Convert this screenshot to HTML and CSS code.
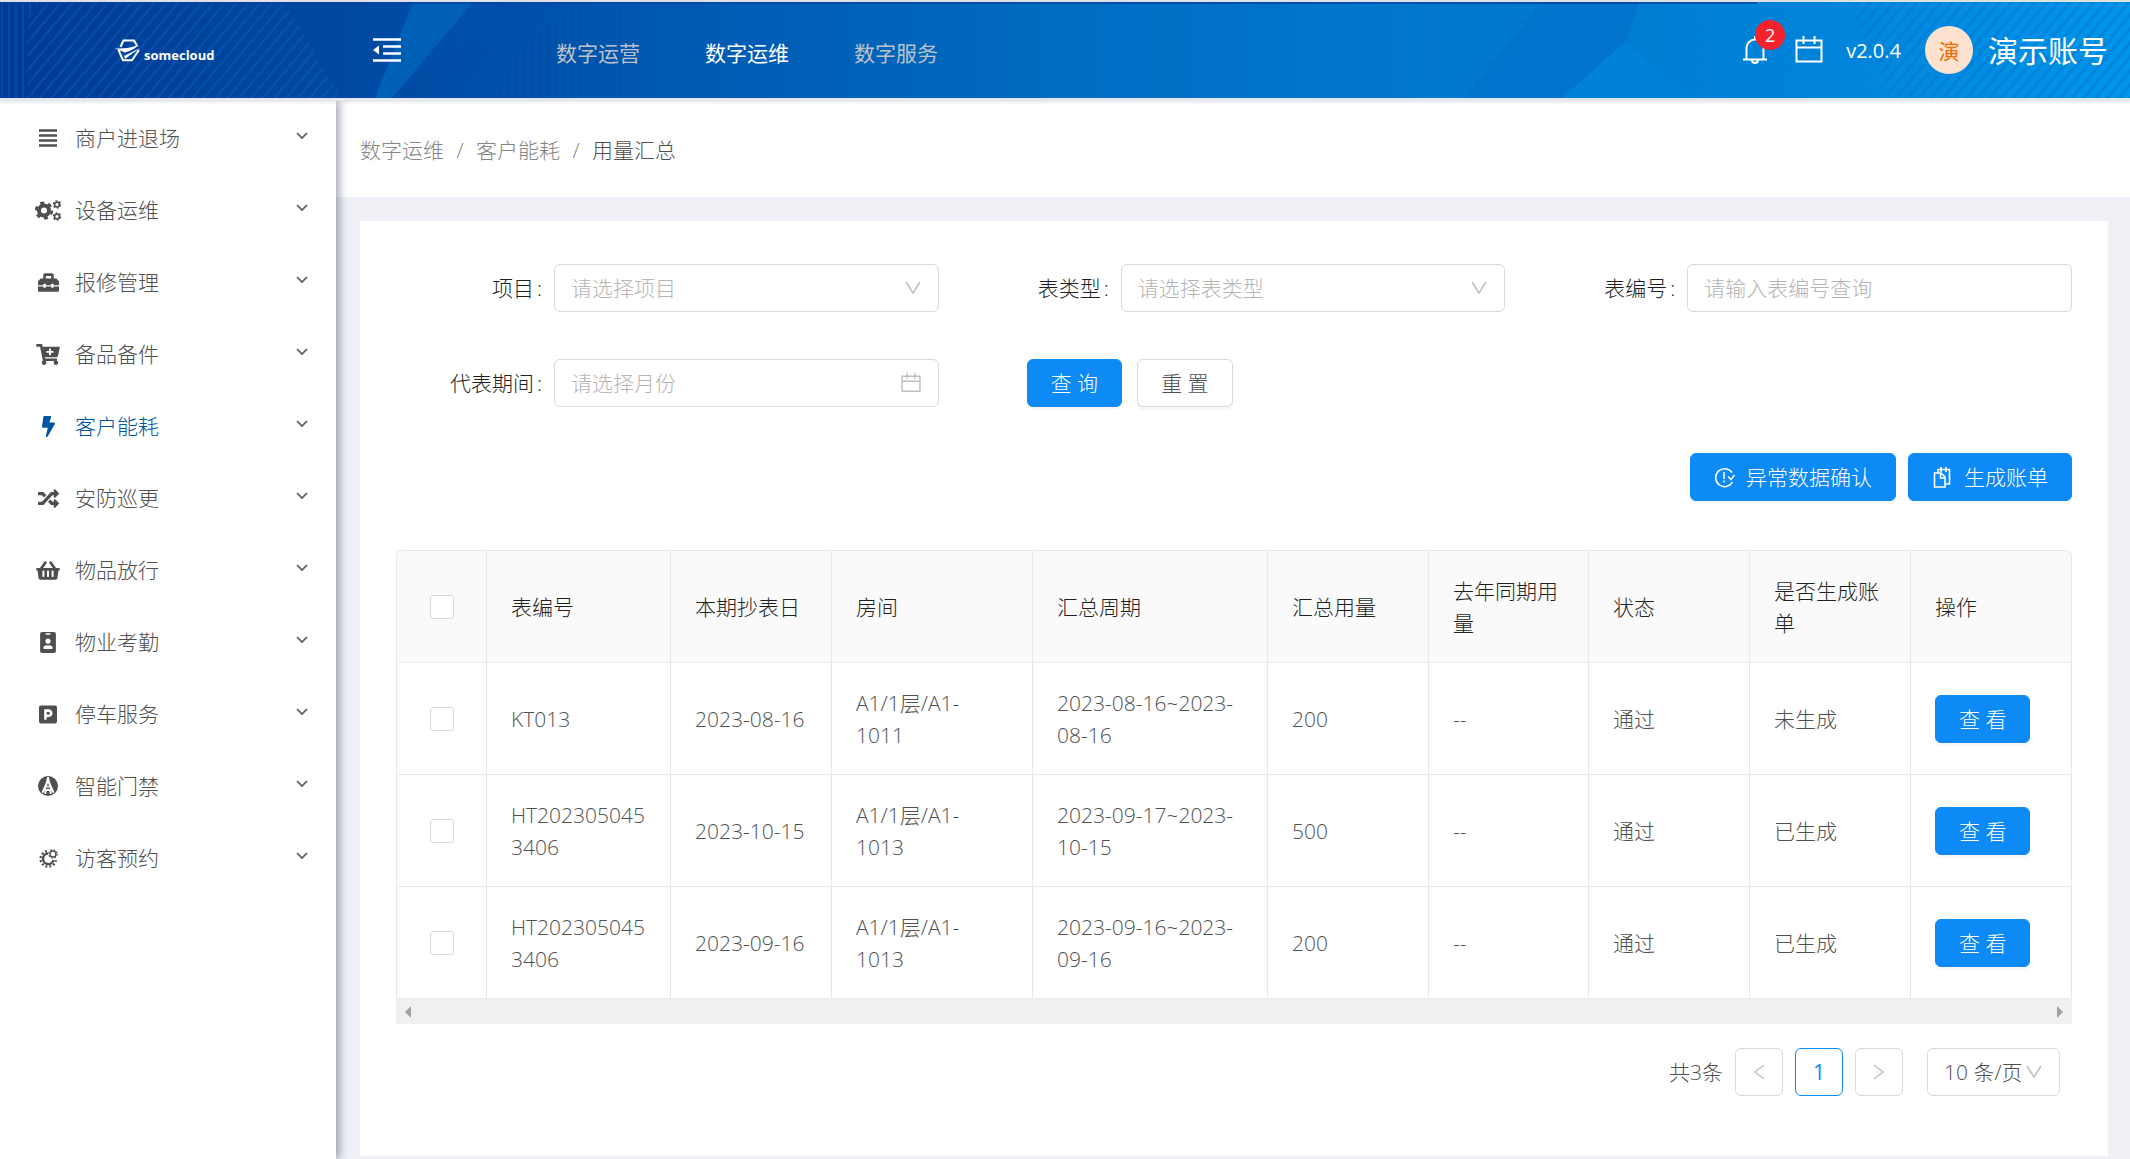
FILE: index.html
```html
<!DOCTYPE html>
<html lang="zh-CN">
<head>
<meta charset="utf-8">
<title>用量汇总</title>
<meta name="viewport" content="width=device-width, initial-scale=1">
<link rel="stylesheet" href="styles.css">
</head>
<body>
<svg width="0" height="0" class="defs" aria-hidden="true">
  <symbol id="chevron" viewBox="0 0 12 12"><path d="M1 3l5 5 5-5" fill="none" stroke="currentColor" stroke-width="1.700"/></symbol>
  <symbol id="arrow-down" viewBox="0 0 16 16"><path d="M1 2l7 11 7-11" fill="none" stroke="currentColor" stroke-width="1.500"/></symbol>
  <symbol id="calendar" viewBox="0 0 28 28"><path d="M1.500 4.500h25v21h-25zM1.500 11.500h25M8.500 0v8M19.500 0v8" fill="none" stroke="currentColor" stroke-width="2"/></symbol>
</svg>

<header class="header">
  <svg class="header-art" viewBox="0 0 2130 96" preserveAspectRatio="none" aria-hidden="true">
    <defs>
      <pattern id="vert" width="7" height="8" patternUnits="userSpaceOnUse"><path d="M2 0v8" stroke="#0a55ae" stroke-width="2" opacity=".6"/></pattern>
      <pattern id="diag" width="9" height="9" patternUnits="userSpaceOnUse" patternTransform="rotate(40)"><path d="M2 0v9" stroke="#0a5cb4" stroke-width="2" opacity=".6"/></pattern>
      <pattern id="fine" width="4" height="4" patternUnits="userSpaceOnUse" patternTransform="rotate(-45)"><path d="M1 0v4" stroke="#003f9c" opacity=".35"/></pattern>
      <pattern id="bright" width="9" height="9" patternUnits="userSpaceOnUse" patternTransform="rotate(40)"><path d="M2 0v9" stroke="#0078d2" stroke-width="3" opacity=".6"/></pattern>
      <linearGradient id="fade"><stop offset="0" stop-color="#fff"/><stop offset="1" stop-color="#000"/></linearGradient>
      <mask id="fade-mask" maskUnits="userSpaceOnUse" x="390" y="0" width="330" height="96"><rect x="390" width="330" height="96" fill="url(#fade)"/></mask>
    </defs>
    <path d="M0 0H40L28 20V96H0z" fill="url(#vert)"/>
    <path d="M40 0H285L340 96H28V20z" fill="url(#diag)"/>
    <path d="M285 0H413L375 96H340z" fill="url(#fine)"/>
    <path d="M413 0H473L392 96H375z" fill="#0060b6"/>
    <g mask="url(#fade-mask)" fill="none" stroke="#004aa4" stroke-width="2" opacity=".7">
      <path d="M402 94v-8h16l78-66h52v76M414 94v-16h18l66-50h42v68M426 94v-22h14l62-36h30v60M438 94v-28h14l56-22h16v52M450 94v-24h14l52-18v44M464 94v-18h12l32-10v30M478 94v-12h22v14M556 20v76M564 12v84M572 4v92M580 0v96M588 0v96M596 0v96M604 0v96M612 0v96M620 0v96M628 0v96M636 0v96M644 0v96M484 12h72M492 4h72"/>
    </g>
    <path d="M1542 0H1640L1625 40 1562 96H1465z" fill="#0074cc"/>
    <path d="M1625 40L1692 96H1562z" fill="#0082d8"/>
    <path d="M1640 0H1848L1892 96H1692L1625 40z" fill="url(#fine)" opacity=".3"/>
    <path d="M1420 3h120M1420 11h110M1420 19h108M1420 27h102M1420 35h98M1420 43h92M1420 51h86M1420 59h80M1420 67h74M1420 75h68" stroke="#0070c8" stroke-width="3" opacity=".35"/>
    <path d="M1848 0H2130V96H1892z" fill="url(#bright)"/>
    <path d="M0 1h1757" stroke="#0040a0" stroke-width="2" opacity=".7"/>
  </svg>
  <a class="logo" href="#" aria-label="somecloud">
    <svg width="26" height="23" viewBox="0 0 26 23" aria-hidden="true"><path d="M5.500 8L8.500 1.500H19l3.500 6M3.500 11l4.500 10.300h9L24 11" fill="none" stroke="#fff" stroke-width="2"/><path d="M0 9.500Q14 10 23 6Q20 11 10 13.500zM25 9L10 20l-1-3 8-4z" fill="#fff"/></svg>
    <span>somecloud</span>
  </a>
  <button class="fold" type="button" aria-label="收起菜单">
    <svg width="28" height="24" viewBox="0 0 28 24"><path d="M0 1.500h28M10 8.500h18M10 15.500h18M0 22.500h28" stroke="#fff" stroke-width="2.500"/><path d="M0 12l6-4.500v9z" fill="#fff"/></svg>
  </button>
  <nav class="nav">
    <a href="#">数字运营</a>
    <a href="#" class="active">数字运维</a>
    <a href="#">数字服务</a>
  </nav>
  <div class="tools">
    <button class="bell" type="button" aria-label="消息">
      <svg width="24" height="28" viewBox="0 0 24 28"><path d="M0 23.500h24M3.500 23V12a8.500 8.500 0 0 1 17 0v11M12 0v4M9 24a3 3 0 0 0 6 0" fill="none" stroke="#fff" stroke-width="2"/></svg>
      <span class="badge">2</span>
    </button>
    <button class="cal" type="button" aria-label="日历"><svg width="28" height="28"><use href="#calendar"/></svg></button>
    <span class="version">v2.0.4</span>
    <span class="avatar">演</span>
    <span class="user">演示账号</span>
  </div>
</header>

<div class="layout">
  <aside class="sidebar">
    <ul class="menu">
      <li><a href="#"><span class="ico"><svg width="18" height="18" viewBox="0 0 18 18"><path d="M0 1.500h18M0 6.500h18M0 11.500h18M0 16.500h18" stroke="currentColor" stroke-width="2.500"/></svg></span>商户进退场<svg class="chev"><use href="#chevron"/></svg></a></li>
      <li><a href="#"><span class="ico"><svg width="26" height="21" viewBox="0 0 26 21" fill="none" stroke="currentColor"><circle cx="9" cy="10.500" r="5" stroke-width="4"/><circle cx="9" cy="10.500" r="7.800" stroke-width="2.600" stroke-dasharray="4.080 4.080"/><circle cx="22" cy="4.500" r="2.400" stroke-width="1.600"/><circle cx="22" cy="4.500" r="3.600" stroke-width="1.400" stroke-dasharray="1.880 1.880"/><circle cx="22" cy="16.500" r="2.400" stroke-width="1.600"/><circle cx="22" cy="16.500" r="3.600" stroke-width="1.400" stroke-dasharray="1.880 1.880"/></svg></span>设备运维<svg class="chev"><use href="#chevron"/></svg></a></li>
      <li><a href="#"><span class="ico"><svg width="21" height="21" viewBox="0 0 512 512"><path fill="currentColor" d="M502.630 214.630l-45.250-45.250c-6-6-14.140-9.370-22.630-9.370H384V80c0-26.510-21.490-48-48-48H176c-26.510 0-48 21.490-48 48v80H77.250c-8.490 0-16.620 3.370-22.630 9.370L9.370 214.630c-6 6-9.370 14.140-9.370 22.630V320h128v-16c0-8.840 7.160-16 16-16h32c8.840 0 16 7.160 16 16v16h128v-16c0-8.840 7.160-16 16-16h32c8.840 0 16 7.160 16 16v16h128v-82.750c0-8.480-3.370-16.620-9.370-22.620zM320 160H192V96h128v64zm64 208c0 8.840-7.160 16-16 16h-32c-8.840 0-16-7.160-16-16v-16H192v16c0 8.840-7.160 16-16 16h-32c-8.840 0-16-7.160-16-16v-16H0v96c0 17.670 14.330 32 32 32h448c17.670 0 32-14.330 32-32v-96H384v16z"/></svg></span>报修管理<svg class="chev"><use href="#chevron"/></svg></a></li>
      <li><a href="#"><span class="ico"><svg width="24" height="21" viewBox="0 0 576 512"><path fill="currentColor" d="M504.717 320H211.572l6.545 32h268.418c15.401 0 26.816 14.301 23.403 29.319l-5.517 24.276C523.112 414.668 536 433.828 536 456c0 31.202-25.519 56.444-56.824 55.994-29.823-.429-54.350-24.631-55.155-54.447-.440-16.287 6.085-31.049 16.803-41.548H231.176C241.553 426.165 248 440.326 248 456c0 31.813-26.528 57.431-58.670 55.938-28.540-1.325-51.751-24.385-53.251-52.917-1.158-22.034 10.436-41.455 28.051-51.586L93.883 64H24C10.745 64 0 53.255 0 40V24C0 10.745 10.745 0 24 0h102.529c11.401 0 21.228 8.021 23.513 19.190L159.208 64H551.990c15.401 0 26.816 14.301 23.403 29.319l-47.273 208C525.637 312.246 515.923 320 504.717 320zM408 168h-48v-40c0-8.837-7.163-16-16-16h-16c-8.837 0-16 7.163-16 16v40h-48c-8.837 0-16 7.163-16 16v16c0 8.837 7.163 16 16 16h48v40c0 8.837 7.163 16 16 16h16c8.837 0 16-7.163 16-16v-40h48c8.837 0 16-7.163 16-16v-16c0-8.837-7.163-16-16-16z"/></svg></span>备品备件<svg class="chev"><use href="#chevron"/></svg></a></li>
      <li><a href="#" class="active"><span class="ico"><svg width="13" height="21" viewBox="0 0 320 512"><path fill="currentColor" d="M296 160H180.600l42.600-129.800C227.200 15 215.700 0 200 0H56C44 0 33.800 8.900 32.200 20.800l-32 240C-1.700 275.200 9.500 288 24 288h118.700L96.600 482.500c-3.600 15.200 8 29.500 23.300 29.500 8.400 0 16.400-4.400 20.800-12l176-304c9.300-15.900-2.200-36-20.700-36z"/></svg></span>客户能耗<svg class="chev"><use href="#chevron"/></svg></a></li>
      <li><a href="#"><span class="ico"><svg width="21" height="21" viewBox="0 0 512 512"><path fill="currentColor" d="M504.971 359.029c9.373 9.373 9.373 24.569 0 33.941l-80 79.984c-15.010 15.010-40.971 4.490-40.971-16.971V416h-58.785a12.004 12.004 0 0 1-8.773-3.812l-70.556-75.596 53.333-57.143L352 336h32v-39.981c0-21.438 25.943-31.998 40.971-16.971l80 79.981zM12 176h84l52.781 56.551 53.333-57.143-70.556-75.596A11.999 11.999 0 0 0 122.785 96H12c-6.627 0-12 5.373-12 12v56c0 6.627 5.373 12 12 12zm372 0v39.984c0 21.460 25.961 31.980 40.971 16.971l80-79.984c9.373-9.373 9.373-24.569 0-33.941l-80-79.981C409.943 24.021 384 34.582 384 56.019V96h-58.785a12.004 12.004 0 0 0-8.773 3.812L96 336H12c-6.627 0-12 5.373-12 12v56c0 6.627 5.373 12 12 12h110.785c3.326 0 6.503-1.381 8.773-3.812L352 176h32z"/></svg></span>安防巡更<svg class="chev"><use href="#chevron"/></svg></a></li>
      <li><a href="#"><span class="ico"><svg width="24" height="21" viewBox="0 0 576 512"><path fill="currentColor" d="M576 216v16c0 13.255-10.745 24-24 24h-8l-26.113 182.788C514.509 462.435 494.257 480 470.370 480H105.630c-23.887 0-44.139-17.565-47.518-41.212L32 256h-8c-13.255 0-24-10.745-24-24v-16c0-13.255 10.745-24 24-24h67.341l106.780-146.821c10.395-14.292 30.407-17.453 44.701-7.058 14.293 10.395 17.453 30.408 7.058 44.701L170.477 192h235.046L326.120 82.821c-10.395-14.292-7.234-34.306 7.059-44.701 14.291-10.395 34.306-7.235 44.701 7.058L484.659 192H552c13.255 0 24 10.745 24 24zM312 392V280c0-13.255-10.745-24-24-24s-24 10.745-24 24v112c0 13.255 10.745 24 24 24s24-10.745 24-24zm112 0V280c0-13.255-10.745-24-24-24s-24 10.745-24 24v112c0 13.255 10.745 24 24 24s24-10.745 24-24zm-224 0V280c0-13.255-10.745-24-24-24s-24 10.745-24 24v112c0 13.255 10.745 24 24 24s24-10.745 24-24z"/></svg></span>物品放行<svg class="chev"><use href="#chevron"/></svg></a></li>
      <li><a href="#"><span class="ico"><svg width="16" height="21" viewBox="0 0 384 512"><path fill="currentColor" d="M336 0H48C21.500 0 0 21.500 0 48v416c0 26.500 21.500 48 48 48h288c26.500 0 48-21.500 48-48V48c0-26.500-21.500-48-48-48zM144 32h96c8.800 0 16 7.200 16 16s-7.200 16-16 16h-96c-8.800 0-16-7.200-16-16s7.200-16 16-16zm48 128c35.300 0 64 28.700 64 64s-28.700 64-64 64-64-28.700-64-64 28.700-64 64-64zm112 236.800c0 10.600-10 19.200-22.400 19.200H102.400C90 416 80 407.400 80 396.800v-19.200c0-31.800 30.100-57.600 67.200-57.600h5c12.300 5.100 25.700 8 39.800 8s27.600-2.900 39.800-8h5c37.100 0 67.200 25.800 67.200 57.600v19.200z"/></svg></span>物业考勤<svg class="chev"><use href="#chevron"/></svg></a></li>
      <li><a href="#"><span class="ico"><svg width="18" height="21" viewBox="0 0 448 512"><path fill="currentColor" d="M400 32H48C21.500 32 0 53.500 0 80v352c0 26.500 21.500 48 48 48h352c26.500 0 48-21.500 48-48V80c0-26.500-21.500-48-48-48zM240 320h-48v48c0 8.800-7.200 16-16 16h-32c-8.800 0-16-7.200-16-16V144c0-8.800 7.200-16 16-16h96c52.900 0 96 43.100 96 96s-43.100 96-96 96zm0-128h-48v64h48c17.600 0 32-14.400 32-32s-14.400-32-32-32z"/></svg></span>停车服务<svg class="chev"><use href="#chevron"/></svg></a></li>
      <li><a href="#"><span class="ico"><svg width="20" height="20" viewBox="0 0 20 20"><circle cx="10" cy="10" r="10" fill="currentColor"/><path d="M9.200 1h1.600l1.500 6 4 9-1.300 1.500-1.500-3v3.500h-1.500l-.8-3h-2.400l-.8 3H6.500v-3.500l-1.500 3L3.700 16l4-9z" fill="#fff"/><path d="M10 6.500l-2 6.500h4z" fill="currentColor"/><circle cx="10" cy="10.800" r="1" fill="#fff"/></svg></span>智能门禁<svg class="chev"><use href="#chevron"/></svg></a></li>
      <li><a href="#"><span class="ico"><svg width="19" height="19" viewBox="0 0 19 19" fill="none" stroke="currentColor"><path d="M9 4.500a5.300 5.300 0 1 0 5.500 6.500" stroke-width="2.400"/><path d="M8 2.200a7.800 7.800 0 1 0 9 9" stroke-width="2.200" stroke-dasharray="2 2"/><circle cx="14" cy="5" r="3" stroke-width="1.400"/><circle cx="14" cy="5" r="4.200" stroke-width="1.200" stroke-dasharray="1.650 1.650"/></svg></span>访客预约<svg class="chev"><use href="#chevron"/></svg></a></li>
    </ul>
  </aside>

  <main class="main">
    <nav class="crumbs" aria-label="面包屑">
      <a href="#">数字运维</a><span class="sep">/</span><a href="#">客户能耗</a><span class="sep">/</span><span class="here">用量汇总</span>
    </nav>

    <section class="card">
      <form class="filters">
        <div class="field">
          <label for="project">项目<span>:</span></label>
          <div class="control">
            <select id="project"><option>请选择项目</option></select>
            <svg class="suffix" width="16" height="16"><use href="#arrow-down"/></svg>
          </div>
        </div>
        <div class="field">
          <label for="type">表类型<span>:</span></label>
          <div class="control">
            <select id="type"><option>请选择表类型</option></select>
            <svg class="suffix" width="16" height="16"><use href="#arrow-down"/></svg>
          </div>
        </div>
        <div class="field">
          <label for="code">表编号<span>:</span></label>
          <div class="control"><input id="code" type="text" placeholder="请输入表编号查询"></div>
        </div>
        <div class="field">
          <label for="month">代表期间<span>:</span></label>
          <div class="control">
            <input id="month" type="text" placeholder="请选择月份">
            <svg class="suffix" width="20" height="20"><use href="#calendar"/></svg>
          </div>
        </div>
        <div class="buttons">
          <button class="btn primary" type="button">查 询</button>
          <button class="btn" type="reset">重 置</button>
        </div>
      </form>

      <div class="actions">
        <button class="btn primary" type="button"><svg width="21" height="21" viewBox="0 0 21 21" fill="none" stroke="#fff" stroke-width="1.500"><path d="M18 5.500a9 9 0 1 0 .5 9.500M10 5v7M10 13.500v2"/><path d="M14 9.500l3 3 3.500-4.500"/></svg>异常数据确认</button>
        <button class="btn primary" type="button"><svg width="21" height="21" viewBox="0 0 21 21" fill="none" stroke="#fff" stroke-width="1.600"><path d="M2.500 6h6.500l4 4v10H2.500zM8.500 6v5h4.500M6 6V2.500h11.500V17h-4M9 0v5M14 0v5"/></svg>生成账单</button>
      </div>

      <div class="table-box">
        <table>
          <colgroup><col class="w90"><col class="w184"><col class="w161"><col class="w201"><col class="w235"><col class="w161"><col class="w160"><col class="w161"><col class="w161"><col class="w161"></colgroup>
          <thead>
            <tr><th class="pick"><input type="checkbox" aria-label="全选"></th><th>表编号</th><th>本期抄表日</th><th class="room">房间</th><th>汇总周期</th><th>汇总用量</th><th>去年同期用量</th><th>状态</th><th>是否生成账单</th><th>操作</th></tr>
          </thead>
          <tbody>
            <tr><td class="pick"><input type="checkbox" aria-label="选择 KT013"></td><td>KT013</td><td>2023-08-16</td><td class="room">A1/1层/A1-1011</td><td>2023-08-16~2023-08-16</td><td>200</td><td>--</td><td>通过</td><td>未生成</td><td><button class="btn primary" type="button">查 看</button></td></tr>
            <tr><td class="pick"><input type="checkbox" aria-label="选择 HT2023050453406"></td><td>HT2023050453406</td><td>2023-10-15</td><td class="room">A1/1层/A1-1013</td><td>2023-09-17~2023-10-15</td><td>500</td><td>--</td><td>通过</td><td>已生成</td><td><button class="btn primary" type="button">查 看</button></td></tr>
            <tr><td class="pick"><input type="checkbox" aria-label="选择 HT2023050453406"></td><td>HT2023050453406</td><td>2023-09-16</td><td class="room">A1/1层/A1-1013</td><td>2023-09-16~2023-09-16</td><td>200</td><td>--</td><td>通过</td><td>已生成</td><td><button class="btn primary" type="button">查 看</button></td></tr>
          </tbody>
        </table>
      </div>
      <div class="scrollbar" aria-hidden="true">
        <svg width="6" height="12" viewBox="0 0 6 12"><path d="M6 0v12L0 6z" fill="#a0a0a0"/></svg>
        <svg width="6" height="12" viewBox="0 0 6 12"><path d="M0 0v12l6-6z" fill="#a0a0a0"/></svg>
      </div>

      <div class="pager">
        <span>共3条</span>
        <button class="page" type="button" aria-label="上一页"><svg width="12" height="16" viewBox="0 0 12 16"><path d="M11 1L2 8l9 7" fill="none" stroke="#bfbfbf" stroke-width="1.500"/></svg></button>
        <button class="page current" type="button">1</button>
        <button class="page" type="button" aria-label="下一页"><svg width="12" height="16" viewBox="0 0 12 16"><path d="M1 1l9 7-9 7" fill="none" stroke="#bfbfbf" stroke-width="1.500"/></svg></button>
        <div class="control size">
          <select aria-label="每页条数"><option>10 条/页</option></select>
          <svg class="suffix" width="16" height="16"><use href="#arrow-down"/></svg>
        </div>
      </div>
    </section>
  </main>
</div>
</body>
</html>
```
FILE: styles.css
```css
* { box-sizing: border-box; }

body {
  margin: 0;
  min-height: 100vh;
  display: flex;
  flex-direction: column;
  background: #f0f1f6;
  color: #4f4f4f;
  font: 300 21px/32px "Open Sans", "Noto Sans CJK SC", sans-serif;
}

a { color: inherit; text-decoration: none; }
button, input, select { font: inherit; color: inherit; margin: 0; }
button { cursor: pointer; }
svg { display: block; flex: none; }
.defs { position: absolute; }

/* Header */
.header {
  position: relative;
  z-index: 2;
  display: flex;
  flex: none;
  align-items: center;
  height: 101px;
  padding-right: 22px;
  border-top: 2px solid #dfe1e4;
  border-bottom: 3px solid #e4e7eb;
  background: linear-gradient(90deg, #003a94 0%, #004ba4 18%, #005cb4 35%, #006ec4 52%, #007ace 70%, #0086dc 86%, #0096ea 100%);
  color: #fff;
  box-shadow: 0 1px 4px rgba(0, 21, 41, .12);
}
.header-art { position: absolute; top: 0; left: 0; width: 100%; height: 96px; }
.header > :not(.header-art) { position: relative; }
.header button { padding: 0; border: 0; background: none; }

.logo {
  display: flex;
  align-items: center;
  gap: 3px;
  width: 373px;
  padding-left: 115px;
  font: 700 13px/24px "Open Sans", sans-serif;
}
.logo span { padding-top: 10px; }
.nav { display: flex; gap: 65px; margin-left: 155px; padding-top: 6px; font-weight: 400; }
.nav a { color: #bfc3c8; }
.nav .active { color: #fff; }

.tools { display: flex; align-items: center; margin-left: auto; font-weight: 400; }
.header .bell { position: relative; margin-right: 28px; }
.badge {
  position: absolute;
  top: -16px;
  left: 12px;
  width: 30px;
  height: 30px;
  border-radius: 50%;
  background: #f5222d;
  font-size: 18px;
  line-height: 30px;
}
.version { margin: 0 24px 0 23px; padding-top: 2px; font-size: 20px; }
.avatar {
  width: 48px;
  height: 48px;
  margin-right: 15px;
  border-radius: 50%;
  background: #fde3cf;
  color: #f56a00;
  line-height: 50px;
  text-align: center;
}
.user { padding-top: 2px; font-size: 30px; }

/* Layout */
.layout { display: flex; flex: 1; }
.sidebar {
  position: relative;
  z-index: 1;
  flex: none;
  width: 336px;
  background: #fff;
  box-shadow: 3px 0 9px rgba(0, 21, 41, .4);
}
.menu { margin: 0; padding: 1px 0 0; list-style: none; }
.menu a { display: flex; align-items: center; height: 72px; padding: 0 28px; }
.menu .active { color: #0054a6; }
.ico { display: flex; justify-content: center; width: 40px; margin-right: 7px; }
.chev { width: 12px; height: 12px; margin: 0 0 4px auto; color: #595959; }

.main { flex: 1; min-width: 0; }
.crumbs { display: flex; align-items: center; height: 96px; padding: 2px 24px 0; background: #fff; color: #858585; }
.sep { width: 32px; text-align: center; }
.here { color: #4f4f4f; }
.card { margin: 24px 22px 0 24px; padding: 43px 36px 60px; background: #fff; }

/* Filters */
.filters { display: grid; grid-template-columns: repeat(3, 1fr); gap: 47px 24px; }
.field { display: flex; align-items: center; }
.field label { width: 158px; padding-right: 12px; text-align: right; color: #1f1f1f; flex: none; }
.field label span { margin-left: 3px; }
.control { position: relative; flex: 1; }
.control input, .control select {
  display: block;
  width: 100%;
  height: 48px;
  padding: 0 16px;
  border: 1px solid #d9d9d9;
  border-radius: 6px;
  background: #fff;
  appearance: none;
}
.control select { color: #b5b5b5; }
.control input::placeholder { color: #b5b5b5; opacity: 1; }
.suffix { position: absolute; top: 50%; right: 18px; transform: translateY(-50%); color: #bfbfbf; pointer-events: none; }
.buttons { display: flex; gap: 15px; padding-left: 64px; }

.btn {
  display: inline-flex;
  align-items: center;
  justify-content: center;
  gap: 11px;
  height: 48px;
  padding: 0 23px;
  border: 1px solid #d9d9d9;
  border-radius: 6px;
  background: #fff;
  box-shadow: 0 3px 0 rgba(0, 0, 0, .03);
  white-space: nowrap;
}
.btn.primary { border-color: #0d8af5; background: #0d8af5; color: #fff; }
.actions { display: flex; justify-content: flex-end; gap: 12px; margin: 46px 0 49px; }

/* Table */
.table-box { border: solid #e8e8e8; border-width: 1px 0 0 1px; border-radius: 6px 6px 0 0; overflow: hidden; }
table { width: 100%; table-layout: fixed; border-collapse: separate; border-spacing: 0; }
.w90 { width: 90px; }
.w160 { width: 160px; }
.w161 { width: 161px; }
.w184 { width: 184px; }
.w201 { width: 201px; }
.w235 { width: 235px; }
th, td {
  height: 112px;
  padding: 0 24px;
  border: solid #e8e8e8;
  border-width: 0 1px 1px 0;
  text-align: left;
  font-weight: inherit;
  overflow-wrap: break-word;
}
th { background: #fafafa; color: #1f1f1f; }
th:last-child { border-top-right-radius: 6px; }
.room { padding-right: 36px; }
.pick input {
  display: block;
  width: 24px;
  height: 24px;
  margin: 0 auto;
  border: 1px solid #d9d9d9;
  border-radius: 3px;
  background: #fff;
  appearance: none;
}
.scrollbar { display: flex; align-items: center; justify-content: space-between; height: 25px; padding: 0 9px; background: #f0f0f0; }

/* Pagination */
.pager { display: flex; align-items: center; justify-content: flex-end; gap: 12px; margin-top: 24px; padding-right: 12px; }
.page {
  display: flex;
  align-items: center;
  justify-content: center;
  width: 48px;
  height: 48px;
  padding: 0;
  border: 1px solid #d9d9d9;
  border-radius: 6px;
  background: #fff;
}
.page.current { border-color: #0d8af5; color: #0d8af5; font-weight: 400; }
.size { flex: none; width: 133px; margin-left: 12px; }
.size select { color: #4f4f4f; }
```
